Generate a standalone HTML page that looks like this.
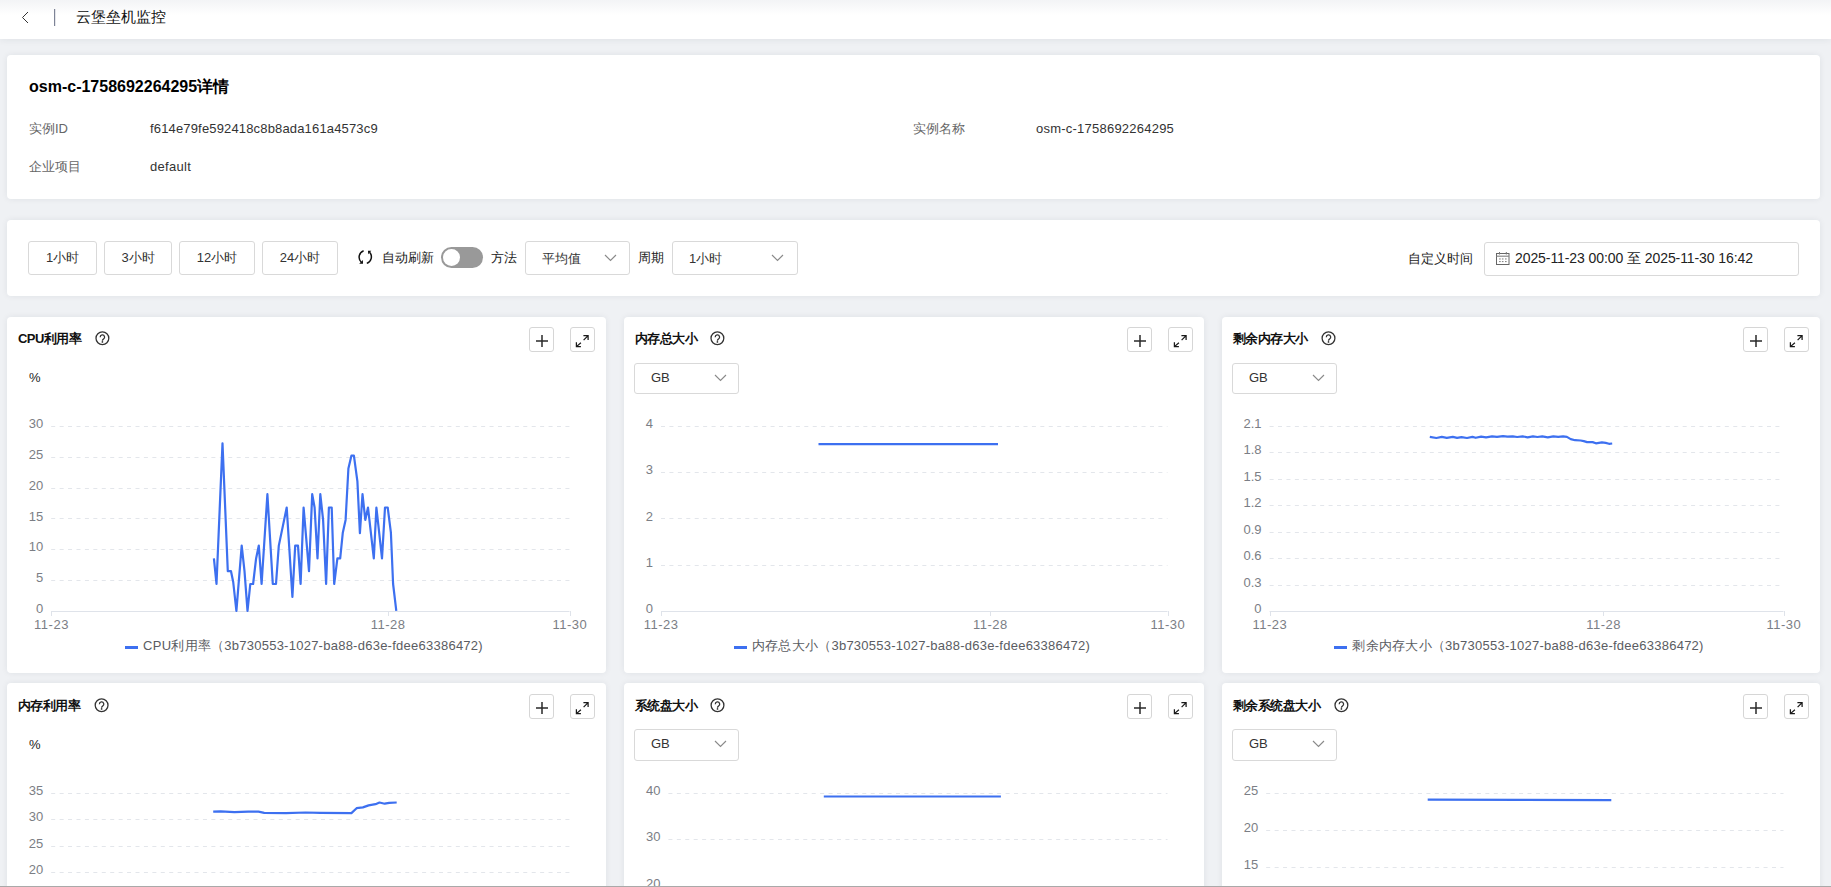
<!DOCTYPE html><html><head><meta charset="utf-8"><title>云堡垒机监控</title><style>
*{margin:0;padding:0;box-sizing:border-box}
html,body{width:1831px;height:887px;overflow:hidden;background:#eff1f4;font-family:"Liberation Sans",sans-serif;color:#333}
.abs{position:absolute}
.card{position:absolute;background:#fff;border-radius:4px;box-shadow:0 0 6px rgba(30,40,60,0.075)}
.t13{font-size:13px;line-height:16px;white-space:nowrap}
.btn{position:absolute;border:1px solid #d9d9d9;border-radius:3px;background:#fff;font-size:13px;color:#333;text-align:center;white-space:nowrap}
.sel{position:absolute;border:1px solid #d9d9d9;border-radius:3px;background:#fff;font-size:13px;color:#333;white-space:nowrap}
.ibtn{position:absolute;width:25px;height:25px;border:1px solid #d6d6d6;border-radius:3px;background:#fff}
.ttl{position:absolute;font-size:13px;font-weight:bold;color:#111;letter-spacing:-0.55px;white-space:nowrap;line-height:16px}
.lg{position:absolute;font-size:13px;color:#5a5c62;white-space:nowrap;line-height:16px;text-align:center;letter-spacing:0.25px}
svg text{font-family:"Liberation Sans",sans-serif}
</style></head><body>
<div class="abs" style="left:0;top:0;width:1831px;height:39px;background:linear-gradient(#f3f4f6 0px,#fff 15px);box-shadow:0 1px 7px rgba(30,40,60,0.07)"></div>
<svg class="abs" style="left:0;top:0" width="80" height="39"><path d="M28 12 L22.5 17.5 L28 23" fill="none" stroke="#333" stroke-width="1"/><rect x="54" y="9" width="1.2" height="17" fill="#7d8396"/></svg>
<div class="abs" style="left:76px;top:8px;font-size:15px;line-height:18px;color:#111;white-space:nowrap">云堡垒机监控</div>
<div class="card" style="left:7px;top:55px;width:1813px;height:144px"></div>
<div class="abs" style="left:29px;top:78px;font-size:16px;line-height:18px;font-weight:bold;color:#000;white-space:nowrap">osm-c-1758692264295详情</div>
<div class="abs t13" style="left:29px;top:121px;color:#666">实例ID</div>
<div class="abs t13" style="left:150px;top:121px;color:#333;letter-spacing:0.16px">f614e79fe592418c8b8ada161a4573c9</div>
<div class="abs t13" style="left:913px;top:121px;color:#666">实例名称</div>
<div class="abs t13" style="left:1036px;top:121px;color:#333;letter-spacing:0.23px">osm-c-1758692264295</div>
<div class="abs t13" style="left:29px;top:159px;color:#666">企业项目</div>
<div class="abs t13" style="left:150px;top:159px;color:#333;letter-spacing:0.3px">default</div>
<div class="card" style="left:7px;top:220px;width:1813px;height:76px"></div>
<div class="btn" style="left:28px;top:241px;width:69px;height:34px;line-height:32px">1小时</div>
<div class="btn" style="left:104px;top:241px;width:68px;height:34px;line-height:32px">3小时</div>
<div class="btn" style="left:179px;top:241px;width:76px;height:34px;line-height:32px">12小时</div>
<div class="btn" style="left:262px;top:241px;width:76px;height:34px;line-height:32px">24小时</div>
<svg class="abs" style="left:352px;top:246px" width="28" height="24"><path d="M11.6 4.7 A6.9 6.9 0 0 0 9.3 16.2" fill="none" stroke="#111" stroke-width="1.5"/><path d="M7.2 17.8 L11 17.8 L10.9 13.9 Z" fill="#111"/><path d="M14.8 17.4 A6.9 6.9 0 0 0 17.6 6.3" fill="none" stroke="#111" stroke-width="1.5"/><path d="M16.0 4.8 L19.3 4.8 L16.2 8.3 Z" fill="#111"/></svg>
<div class="abs t13" style="left:382px;top:250px;color:#222">自动刷新</div>
<div class="abs" style="left:441px;top:247px;width:42px;height:21px;border-radius:11px;background:#999"></div>
<div class="abs" style="left:443px;top:249px;width:17px;height:17px;border-radius:50%;background:#fff"></div>
<div class="abs t13" style="left:491px;top:250px;color:#222">方法</div>
<div class="sel" style="left:525px;top:241px;width:105px;height:34px"></div>
<div class="abs t13" style="left:542px;top:251px;color:#333">平均值</div>
<svg class="abs" style="left:603px;top:253px" width="16" height="10"><path d="M2 2 L7.5 7.5 L13 2" fill="none" stroke="#8a8a8a" stroke-width="1.15"/></svg>
<div class="abs t13" style="left:638px;top:250px;color:#222">周期</div>
<div class="sel" style="left:672px;top:241px;width:126px;height:34px"></div>
<div class="abs t13" style="left:689px;top:251px;color:#333">1小时</div>
<svg class="abs" style="left:770px;top:253px" width="16" height="10"><path d="M2 2 L7.5 7.5 L13 2" fill="none" stroke="#8a8a8a" stroke-width="1.15"/></svg>
<div class="abs t13" style="left:1408px;top:251px;color:#222">自定义时间</div>
<div class="sel" style="left:1484px;top:242px;width:315px;height:34px"></div>
<svg class="abs" style="left:1495px;top:250px" width="16" height="17"><rect x="1.5" y="3.5" width="12.5" height="11" fill="none" stroke="#666" stroke-width="1"/><line x1="1.5" y1="6.2" x2="14" y2="6.2" stroke="#888" stroke-width="1.2"/><line x1="4.5" y1="2" x2="4.5" y2="4.5" stroke="#777"/><line x1="11.3" y1="2" x2="11.3" y2="4.5" stroke="#777"/><g fill="#888"><rect x="4.1" y="8.4" width="1.6" height="1.1"/><rect x="6.9" y="8.4" width="1.6" height="1.1"/><rect x="10" y="8.4" width="1.6" height="1.1"/><rect x="4.1" y="11" width="1.6" height="1.1"/><rect x="6.9" y="11" width="1.6" height="1.1"/><rect x="10" y="11" width="1.6" height="1.1"/></g></svg>
<div class="abs" style="left:1515px;top:250px;font-size:14px;line-height:17px;color:#222;white-space:nowrap;letter-spacing:-0.08px">2025-11-23 00:00 至 2025-11-30 16:42</div>
<div class="card" style="left:7px;top:317px;width:599px;height:356px"></div>
<div class="ttl" style="left:18px;top:331px">CPU利用率</div>
<div class="ibtn" style="left:529px;top:327px"></div>
<div class="ibtn" style="left:570px;top:327px"></div>
<div class="abs t13" style="left:29px;top:370px;color:#222">%</div>
<div class="lg" style="left:4px;top:638px;width:600px"><span style="display:inline-block;width:13px;height:2.5px;background:#3d70f0;vertical-align:middle;margin-right:5px;position:relative;top:1px"></span>CPU利用率（3b730553-1027-ba88-d63e-fdee63386472)</div>
<div class="card" style="left:624px;top:317px;width:580px;height:356px"></div>
<div class="ttl" style="left:635px;top:331px">内存总大小</div>
<div class="ibtn" style="left:1127px;top:327px"></div>
<div class="ibtn" style="left:1168px;top:327px"></div>
<div class="sel" style="left:634px;top:363px;width:105px;height:31px"></div>
<div class="abs t13" style="left:651px;top:370px;color:#333">GB</div>
<svg class="abs" style="left:713px;top:373px" width="16" height="10"><path d="M2 2 L7.5 7.5 L13 2" fill="none" stroke="#8a8a8a" stroke-width="1.15"/></svg>
<div class="lg" style="left:612px;top:638px;width:600px"><span style="display:inline-block;width:13px;height:2.5px;background:#3d70f0;vertical-align:middle;margin-right:5px;position:relative;top:1px"></span>内存总大小（3b730553-1027-ba88-d63e-fdee63386472)</div>
<div class="card" style="left:1222px;top:317px;width:598px;height:356px"></div>
<div class="ttl" style="left:1233px;top:331px">剩余内存大小</div>
<div class="ibtn" style="left:1743px;top:327px"></div>
<div class="ibtn" style="left:1784px;top:327px"></div>
<div class="sel" style="left:1232px;top:363px;width:105px;height:31px"></div>
<div class="abs t13" style="left:1249px;top:370px;color:#333">GB</div>
<svg class="abs" style="left:1311px;top:373px" width="16" height="10"><path d="M2 2 L7.5 7.5 L13 2" fill="none" stroke="#8a8a8a" stroke-width="1.15"/></svg>
<div class="lg" style="left:1219px;top:638px;width:600px"><span style="display:inline-block;width:13px;height:2.5px;background:#3d70f0;vertical-align:middle;margin-right:5px;position:relative;top:1px"></span>剩余内存大小（3b730553-1027-ba88-d63e-fdee63386472)</div>
<div class="card" style="left:7px;top:683px;width:599px;height:400px"></div>
<div class="ttl" style="left:18px;top:698px">内存利用率</div>
<div class="ibtn" style="left:529px;top:694px"></div>
<div class="ibtn" style="left:570px;top:694px"></div>
<div class="abs t13" style="left:29px;top:737px;color:#222">%</div>
<div class="lg" style="left:4px;top:1005px;width:600px"><span style="display:inline-block;width:13px;height:2.5px;background:#3d70f0;vertical-align:middle;margin-right:5px;position:relative;top:1px"></span>内存利用率（3b730553-1027-ba88-d63e-fdee63386472)</div>
<div class="card" style="left:624px;top:683px;width:580px;height:400px"></div>
<div class="ttl" style="left:635px;top:698px">系统盘大小</div>
<div class="ibtn" style="left:1127px;top:694px"></div>
<div class="ibtn" style="left:1168px;top:694px"></div>
<div class="sel" style="left:634px;top:729px;width:105px;height:32px"></div>
<div class="abs t13" style="left:651px;top:736px;color:#333">GB</div>
<svg class="abs" style="left:713px;top:739px" width="16" height="10"><path d="M2 2 L7.5 7.5 L13 2" fill="none" stroke="#8a8a8a" stroke-width="1.15"/></svg>
<div class="lg" style="left:612px;top:1005px;width:600px"><span style="display:inline-block;width:13px;height:2.5px;background:#3d70f0;vertical-align:middle;margin-right:5px;position:relative;top:1px"></span>系统盘大小（3b730553-1027-ba88-d63e-fdee63386472)</div>
<div class="card" style="left:1222px;top:683px;width:598px;height:400px"></div>
<div class="ttl" style="left:1233px;top:698px">剩余系统盘大小</div>
<div class="ibtn" style="left:1743px;top:694px"></div>
<div class="ibtn" style="left:1784px;top:694px"></div>
<div class="sel" style="left:1232px;top:729px;width:105px;height:32px"></div>
<div class="abs t13" style="left:1249px;top:736px;color:#333">GB</div>
<svg class="abs" style="left:1311px;top:739px" width="16" height="10"><path d="M2 2 L7.5 7.5 L13 2" fill="none" stroke="#8a8a8a" stroke-width="1.15"/></svg>
<div class="lg" style="left:1219px;top:1005px;width:600px"><span style="display:inline-block;width:13px;height:2.5px;background:#3d70f0;vertical-align:middle;margin-right:5px;position:relative;top:1px"></span>剩余系统盘大小（3b730553-1027-ba88-d63e-fdee63386472)</div>
<svg class="abs" style="left:0;top:0" width="1831" height="887">
<circle cx="102.4" cy="338.3" r="6.4" fill="none" stroke="#333" stroke-width="1.3"/>
<path d="M100.2 337.2 a2.2 2.2 0 1 1 3.2 1.9 c-0.8 0.4 -1 0.9 -1 1.6" fill="none" stroke="#333" stroke-width="1.3"/>
<circle cx="102.4" cy="341.9" r="0.85" fill="#333"/>
<line x1="51.2" y1="426.5" x2="569.5" y2="426.5" stroke="#e3e6eb" stroke-width="1" stroke-dasharray="4 4.43"/>
<text x="43.2" y="428.0" font-size="13" fill="#7b7e85" text-anchor="end">30</text>
<line x1="51.2" y1="457.5" x2="569.5" y2="457.5" stroke="#e3e6eb" stroke-width="1" stroke-dasharray="4 4.43"/>
<text x="43.2" y="458.8" font-size="13" fill="#7b7e85" text-anchor="end">25</text>
<line x1="51.2" y1="488.5" x2="569.5" y2="488.5" stroke="#e3e6eb" stroke-width="1" stroke-dasharray="4 4.43"/>
<text x="43.2" y="489.7" font-size="13" fill="#7b7e85" text-anchor="end">20</text>
<line x1="51.2" y1="518.5" x2="569.5" y2="518.5" stroke="#e3e6eb" stroke-width="1" stroke-dasharray="4 4.43"/>
<text x="43.2" y="520.5" font-size="13" fill="#7b7e85" text-anchor="end">15</text>
<line x1="51.2" y1="549.5" x2="569.5" y2="549.5" stroke="#e3e6eb" stroke-width="1" stroke-dasharray="4 4.43"/>
<text x="43.2" y="551.3" font-size="13" fill="#7b7e85" text-anchor="end">10</text>
<line x1="51.2" y1="580.5" x2="569.5" y2="580.5" stroke="#e3e6eb" stroke-width="1" stroke-dasharray="4 4.43"/>
<text x="43.2" y="582.2" font-size="13" fill="#7b7e85" text-anchor="end">5</text>
<text x="43.2" y="613.0" font-size="13" fill="#7b7e85" text-anchor="end">0</text>
<line x1="51.2" y1="611.5" x2="569.5" y2="611.5" stroke="#dfe3ea" stroke-width="1"/>
<line x1="51.5" y1="611.0" x2="51.5" y2="616.0" stroke="#dfe3ea" stroke-width="1"/>
<line x1="388.5" y1="611.0" x2="388.5" y2="616.0" stroke="#dfe3ea" stroke-width="1"/>
<line x1="570.5" y1="611.0" x2="570.5" y2="616.0" stroke="#dfe3ea" stroke-width="1"/>
<text x="51.5" y="629.0" font-size="13" fill="#7b7e85" text-anchor="middle" letter-spacing="0.5">11-23</text>
<text x="388.2" y="629.0" font-size="13" fill="#7b7e85" text-anchor="middle" letter-spacing="0.5">11-28</text>
<text x="569.8" y="629.0" font-size="13" fill="#7b7e85" text-anchor="middle" letter-spacing="0.5">11-30</text>
<polyline points="213.9,558.4 216.5,584.0 222.5,443.3 227.8,571.2 231.0,571.2 233.2,582.0 236.4,610.8 241.7,545.6 244.5,571.2 247.5,610.8 250.3,584.0 253.1,584.0 256.1,558.4 258.8,545.6 261.6,584.0 267.4,494.2 272.8,584.0 276.0,584.0 278.8,545.6 286.7,507.5 292.4,596.9 295.2,545.6 298.0,545.6 300.6,584.0 303.6,507.5 309.0,571.2 312.2,494.2 314.6,507.5 317.5,558.4 320.3,494.2 323.1,519.9 326.1,584.0 328.9,507.5 331.7,507.5 334.2,584.0 337.4,558.4 340.2,558.4 342.8,532.7 345.6,519.9 348.4,468.5 351.4,455.7 353.9,455.7 357.4,481.4 359.9,533.1 362.5,494.2 365.3,519.9 368.0,507.5 373.8,558.4 376.4,507.5 382.0,558.4 385.0,507.5 387.7,507.5 390.9,532.7 393.1,584.0 396.3,610.8" fill="none" stroke="#3d70f0" stroke-width="2.2" stroke-linejoin="round"/>
<circle cx="717.4" cy="338.3" r="6.4" fill="none" stroke="#333" stroke-width="1.3"/>
<path d="M715.2 337.2 a2.2 2.2 0 1 1 3.2 1.9 c-0.8 0.4 -1 0.9 -1 1.6" fill="none" stroke="#333" stroke-width="1.3"/>
<circle cx="717.4" cy="341.9" r="0.85" fill="#333"/>
<line x1="661.0" y1="426.5" x2="1167.5" y2="426.5" stroke="#e3e6eb" stroke-width="1" stroke-dasharray="4 4.43"/>
<text x="653.0" y="428.0" font-size="13" fill="#7b7e85" text-anchor="end">4</text>
<line x1="661.0" y1="472.5" x2="1167.5" y2="472.5" stroke="#e3e6eb" stroke-width="1" stroke-dasharray="4 4.43"/>
<text x="653.0" y="474.2" font-size="13" fill="#7b7e85" text-anchor="end">3</text>
<line x1="661.0" y1="518.5" x2="1167.5" y2="518.5" stroke="#e3e6eb" stroke-width="1" stroke-dasharray="4 4.43"/>
<text x="653.0" y="520.5" font-size="13" fill="#7b7e85" text-anchor="end">2</text>
<line x1="661.0" y1="565.5" x2="1167.5" y2="565.5" stroke="#e3e6eb" stroke-width="1" stroke-dasharray="4 4.43"/>
<text x="653.0" y="566.8" font-size="13" fill="#7b7e85" text-anchor="end">1</text>
<text x="653.0" y="613.0" font-size="13" fill="#7b7e85" text-anchor="end">0</text>
<line x1="661.0" y1="611.5" x2="1167.5" y2="611.5" stroke="#dfe3ea" stroke-width="1"/>
<line x1="661.5" y1="611.0" x2="661.5" y2="616.0" stroke="#dfe3ea" stroke-width="1"/>
<line x1="990.5" y1="611.0" x2="990.5" y2="616.0" stroke="#dfe3ea" stroke-width="1"/>
<line x1="1168.5" y1="611.0" x2="1168.5" y2="616.0" stroke="#dfe3ea" stroke-width="1"/>
<text x="661.2" y="629.0" font-size="13" fill="#7b7e85" text-anchor="middle" letter-spacing="0.5">11-23</text>
<text x="990.3" y="629.0" font-size="13" fill="#7b7e85" text-anchor="middle" letter-spacing="0.5">11-28</text>
<text x="1167.8" y="629.0" font-size="13" fill="#7b7e85" text-anchor="middle" letter-spacing="0.5">11-30</text>
<polyline points="818.5,444.1 998.0,444.1" fill="none" stroke="#3d70f0" stroke-width="2.2" stroke-linejoin="round"/>
<circle cx="1328.5" cy="338.3" r="6.4" fill="none" stroke="#333" stroke-width="1.3"/>
<path d="M1326.3 337.2 a2.2 2.2 0 1 1 3.2 1.9 c-0.8 0.4 -1 0.9 -1 1.6" fill="none" stroke="#333" stroke-width="1.3"/>
<circle cx="1328.5" cy="341.9" r="0.85" fill="#333"/>
<line x1="1269.6" y1="426.5" x2="1783.5" y2="426.5" stroke="#e3e6eb" stroke-width="1" stroke-dasharray="4 4.43"/>
<text x="1261.6" y="428.0" font-size="13" fill="#7b7e85" text-anchor="end">2.1</text>
<line x1="1269.6" y1="452.5" x2="1783.5" y2="452.5" stroke="#e3e6eb" stroke-width="1" stroke-dasharray="4 4.43"/>
<text x="1261.6" y="454.4" font-size="13" fill="#7b7e85" text-anchor="end">1.8</text>
<line x1="1269.6" y1="479.5" x2="1783.5" y2="479.5" stroke="#e3e6eb" stroke-width="1" stroke-dasharray="4 4.43"/>
<text x="1261.6" y="480.9" font-size="13" fill="#7b7e85" text-anchor="end">1.5</text>
<line x1="1269.6" y1="505.5" x2="1783.5" y2="505.5" stroke="#e3e6eb" stroke-width="1" stroke-dasharray="4 4.43"/>
<text x="1261.6" y="507.3" font-size="13" fill="#7b7e85" text-anchor="end">1.2</text>
<line x1="1269.6" y1="532.5" x2="1783.5" y2="532.5" stroke="#e3e6eb" stroke-width="1" stroke-dasharray="4 4.43"/>
<text x="1261.6" y="533.7" font-size="13" fill="#7b7e85" text-anchor="end">0.9</text>
<line x1="1269.6" y1="558.5" x2="1783.5" y2="558.5" stroke="#e3e6eb" stroke-width="1" stroke-dasharray="4 4.43"/>
<text x="1261.6" y="560.1" font-size="13" fill="#7b7e85" text-anchor="end">0.6</text>
<line x1="1269.6" y1="585.5" x2="1783.5" y2="585.5" stroke="#e3e6eb" stroke-width="1" stroke-dasharray="4 4.43"/>
<text x="1261.6" y="586.6" font-size="13" fill="#7b7e85" text-anchor="end">0.3</text>
<text x="1261.6" y="613.0" font-size="13" fill="#7b7e85" text-anchor="end">0</text>
<line x1="1269.6" y1="611.5" x2="1783.5" y2="611.5" stroke="#dfe3ea" stroke-width="1"/>
<line x1="1270.5" y1="611.0" x2="1270.5" y2="616.0" stroke="#dfe3ea" stroke-width="1"/>
<line x1="1603.5" y1="611.0" x2="1603.5" y2="616.0" stroke="#dfe3ea" stroke-width="1"/>
<line x1="1784.5" y1="611.0" x2="1784.5" y2="616.0" stroke="#dfe3ea" stroke-width="1"/>
<text x="1269.8" y="629.0" font-size="13" fill="#7b7e85" text-anchor="middle" letter-spacing="0.5">11-23</text>
<text x="1603.7" y="629.0" font-size="13" fill="#7b7e85" text-anchor="middle" letter-spacing="0.5">11-28</text>
<text x="1783.8" y="629.0" font-size="13" fill="#7b7e85" text-anchor="middle" letter-spacing="0.5">11-30</text>
<polyline points="1429.8,436.9 1436.4,438.0 1441.8,436.9 1446.8,437.8 1452.8,436.9 1457.1,437.8 1461.5,437.1 1467.0,438.0 1472.4,436.9 1475.7,437.8 1481.2,436.6 1486.1,437.3 1492.1,436.4 1497.0,436.9 1503.0,436.2 1507.4,436.7 1512.8,436.4 1517.2,437.0 1522.7,436.4 1527.6,437.3 1533.0,436.4 1537.4,437.0 1542.3,436.4 1547.8,437.3 1553.3,436.4 1558.2,436.9 1563.1,436.4 1566.9,436.9 1570.7,439.1 1575.1,440.2 1580.6,440.5 1583.8,441.1 1587.1,442.1 1592.6,442.1 1595.9,443.3 1601.9,442.4 1605.7,442.9 1609.0,443.8 1612.2,443.5" fill="none" stroke="#3d70f0" stroke-width="2.2" stroke-linejoin="round"/>
<circle cx="101.6" cy="705.3" r="6.4" fill="none" stroke="#333" stroke-width="1.3"/>
<path d="M99.4 704.2 a2.2 2.2 0 1 1 3.2 1.9 c-0.8 0.4 -1 0.9 -1 1.6" fill="none" stroke="#333" stroke-width="1.3"/>
<circle cx="101.6" cy="708.9" r="0.85" fill="#333"/>
<line x1="51.2" y1="793.5" x2="569.5" y2="793.5" stroke="#e3e6eb" stroke-width="1" stroke-dasharray="4 4.43"/>
<text x="43.2" y="795.0" font-size="13" fill="#7b7e85" text-anchor="end">35</text>
<line x1="51.2" y1="819.5" x2="569.5" y2="819.5" stroke="#e3e6eb" stroke-width="1" stroke-dasharray="4 4.43"/>
<text x="43.2" y="821.4" font-size="13" fill="#7b7e85" text-anchor="end">30</text>
<line x1="51.2" y1="846.5" x2="569.5" y2="846.5" stroke="#e3e6eb" stroke-width="1" stroke-dasharray="4 4.43"/>
<text x="43.2" y="847.9" font-size="13" fill="#7b7e85" text-anchor="end">25</text>
<line x1="51.2" y1="872.5" x2="569.5" y2="872.5" stroke="#e3e6eb" stroke-width="1" stroke-dasharray="4 4.43"/>
<text x="43.2" y="874.3" font-size="13" fill="#7b7e85" text-anchor="end">20</text>
<line x1="51.2" y1="899.5" x2="569.5" y2="899.5" stroke="#e3e6eb" stroke-width="1" stroke-dasharray="4 4.43"/>
<text x="43.2" y="900.7" font-size="13" fill="#7b7e85" text-anchor="end">15</text>
<line x1="51.2" y1="925.5" x2="569.5" y2="925.5" stroke="#e3e6eb" stroke-width="1" stroke-dasharray="4 4.43"/>
<text x="43.2" y="927.1" font-size="13" fill="#7b7e85" text-anchor="end">10</text>
<line x1="51.2" y1="952.5" x2="569.5" y2="952.5" stroke="#e3e6eb" stroke-width="1" stroke-dasharray="4 4.43"/>
<text x="43.2" y="953.6" font-size="13" fill="#7b7e85" text-anchor="end">5</text>
<text x="43.2" y="980.0" font-size="13" fill="#7b7e85" text-anchor="end">0</text>
<line x1="51.2" y1="978.5" x2="569.5" y2="978.5" stroke="#dfe3ea" stroke-width="1"/>
<line x1="51.5" y1="978.0" x2="51.5" y2="983.0" stroke="#dfe3ea" stroke-width="1"/>
<line x1="388.5" y1="978.0" x2="388.5" y2="983.0" stroke="#dfe3ea" stroke-width="1"/>
<line x1="570.5" y1="978.0" x2="570.5" y2="983.0" stroke="#dfe3ea" stroke-width="1"/>
<text x="51.5" y="996.0" font-size="13" fill="#7b7e85" text-anchor="middle" letter-spacing="0.5">11-23</text>
<text x="388.2" y="996.0" font-size="13" fill="#7b7e85" text-anchor="middle" letter-spacing="0.5">11-28</text>
<text x="569.8" y="996.0" font-size="13" fill="#7b7e85" text-anchor="middle" letter-spacing="0.5">11-30</text>
<polyline points="213.2,811.6 220.6,811.4 234.4,812.2 248.2,811.6 258.5,811.7 264.2,812.8 286.0,813.1 305.5,812.5 320.4,812.9 351.4,813.1 356.6,808.2 362.9,807.4 368.6,805.4 375.5,804.2 379.5,802.5 384.7,803.7 389.2,802.8 396.7,802.5" fill="none" stroke="#3d70f0" stroke-width="2.2" stroke-linejoin="round"/>
<circle cx="717.5" cy="705.3" r="6.4" fill="none" stroke="#333" stroke-width="1.3"/>
<path d="M715.3 704.2 a2.2 2.2 0 1 1 3.2 1.9 c-0.8 0.4 -1 0.9 -1 1.6" fill="none" stroke="#333" stroke-width="1.3"/>
<circle cx="717.5" cy="708.9" r="0.85" fill="#333"/>
<line x1="668.4" y1="793.5" x2="1167.5" y2="793.5" stroke="#e3e6eb" stroke-width="1" stroke-dasharray="4 4.43"/>
<text x="660.4" y="795.0" font-size="13" fill="#7b7e85" text-anchor="end">40</text>
<line x1="668.4" y1="839.5" x2="1167.5" y2="839.5" stroke="#e3e6eb" stroke-width="1" stroke-dasharray="4 4.43"/>
<text x="660.4" y="841.2" font-size="13" fill="#7b7e85" text-anchor="end">30</text>
<line x1="668.4" y1="886.5" x2="1167.5" y2="886.5" stroke="#e3e6eb" stroke-width="1" stroke-dasharray="4 4.43"/>
<text x="660.4" y="887.5" font-size="13" fill="#7b7e85" text-anchor="end">20</text>
<line x1="668.4" y1="932.5" x2="1167.5" y2="932.5" stroke="#e3e6eb" stroke-width="1" stroke-dasharray="4 4.43"/>
<text x="660.4" y="933.8" font-size="13" fill="#7b7e85" text-anchor="end">10</text>
<text x="660.4" y="980.0" font-size="13" fill="#7b7e85" text-anchor="end">0</text>
<line x1="668.4" y1="978.5" x2="1167.5" y2="978.5" stroke="#dfe3ea" stroke-width="1"/>
<line x1="668.5" y1="978.0" x2="668.5" y2="983.0" stroke="#dfe3ea" stroke-width="1"/>
<line x1="993.5" y1="978.0" x2="993.5" y2="983.0" stroke="#dfe3ea" stroke-width="1"/>
<line x1="1168.5" y1="978.0" x2="1168.5" y2="983.0" stroke="#dfe3ea" stroke-width="1"/>
<text x="668.6" y="996.0" font-size="13" fill="#7b7e85" text-anchor="middle" letter-spacing="0.5">11-23</text>
<text x="992.9" y="996.0" font-size="13" fill="#7b7e85" text-anchor="middle" letter-spacing="0.5">11-28</text>
<text x="1167.8" y="996.0" font-size="13" fill="#7b7e85" text-anchor="middle" letter-spacing="0.5">11-30</text>
<polyline points="823.8,796.5 1000.9,796.5" fill="none" stroke="#3d70f0" stroke-width="2.2" stroke-linejoin="round"/>
<circle cx="1341.4" cy="705.3" r="6.4" fill="none" stroke="#333" stroke-width="1.3"/>
<path d="M1339.2 704.2 a2.2 2.2 0 1 1 3.2 1.9 c-0.8 0.4 -1 0.9 -1 1.6" fill="none" stroke="#333" stroke-width="1.3"/>
<circle cx="1341.4" cy="708.9" r="0.85" fill="#333"/>
<line x1="1266.2" y1="793.5" x2="1783.5" y2="793.5" stroke="#e3e6eb" stroke-width="1" stroke-dasharray="4 4.43"/>
<text x="1258.2" y="795.0" font-size="13" fill="#7b7e85" text-anchor="end">25</text>
<line x1="1266.2" y1="830.5" x2="1783.5" y2="830.5" stroke="#e3e6eb" stroke-width="1" stroke-dasharray="4 4.43"/>
<text x="1258.2" y="832.0" font-size="13" fill="#7b7e85" text-anchor="end">20</text>
<line x1="1266.2" y1="867.5" x2="1783.5" y2="867.5" stroke="#e3e6eb" stroke-width="1" stroke-dasharray="4 4.43"/>
<text x="1258.2" y="869.0" font-size="13" fill="#7b7e85" text-anchor="end">15</text>
<line x1="1266.2" y1="904.5" x2="1783.5" y2="904.5" stroke="#e3e6eb" stroke-width="1" stroke-dasharray="4 4.43"/>
<text x="1258.2" y="906.0" font-size="13" fill="#7b7e85" text-anchor="end">10</text>
<line x1="1266.2" y1="941.5" x2="1783.5" y2="941.5" stroke="#e3e6eb" stroke-width="1" stroke-dasharray="4 4.43"/>
<text x="1258.2" y="943.0" font-size="13" fill="#7b7e85" text-anchor="end">5</text>
<text x="1258.2" y="980.0" font-size="13" fill="#7b7e85" text-anchor="end">0</text>
<line x1="1266.2" y1="978.5" x2="1783.5" y2="978.5" stroke="#dfe3ea" stroke-width="1"/>
<line x1="1266.5" y1="978.0" x2="1266.5" y2="983.0" stroke="#dfe3ea" stroke-width="1"/>
<line x1="1602.5" y1="978.0" x2="1602.5" y2="983.0" stroke="#dfe3ea" stroke-width="1"/>
<line x1="1784.5" y1="978.0" x2="1784.5" y2="983.0" stroke="#dfe3ea" stroke-width="1"/>
<text x="1266.5" y="996.0" font-size="13" fill="#7b7e85" text-anchor="middle" letter-spacing="0.5">11-23</text>
<text x="1602.5" y="996.0" font-size="13" fill="#7b7e85" text-anchor="middle" letter-spacing="0.5">11-28</text>
<text x="1783.8" y="996.0" font-size="13" fill="#7b7e85" text-anchor="middle" letter-spacing="0.5">11-30</text>
<polyline points="1427.7,799.6 1520.0,799.8 1611.3,800.2" fill="none" stroke="#3d70f0" stroke-width="2.2" stroke-linejoin="round"/>
<path d="M536.0 341.0 h12 M542.0 335.0 v12" stroke="#2a2a2a" stroke-width="1.5" fill="none"/>
<path d="M583.4 335.6 H588.1 V339.9 M588.1 335.6 L583.6 340.1" stroke="#1a1a1a" stroke-width="1.25" fill="none"/>
<path d="M576.4 342.3 V346.6 H580.9 M576.4 346.6 L580.9 342.7" stroke="#1a1a1a" stroke-width="1.25" fill="none"/>
<path d="M1134.0 341.0 h12 M1140.0 335.0 v12" stroke="#2a2a2a" stroke-width="1.5" fill="none"/>
<path d="M1181.4 335.6 H1186.1 V339.9 M1186.1 335.6 L1181.6 340.1" stroke="#1a1a1a" stroke-width="1.25" fill="none"/>
<path d="M1174.4 342.3 V346.6 H1178.9 M1174.4 346.6 L1178.9 342.7" stroke="#1a1a1a" stroke-width="1.25" fill="none"/>
<path d="M1750.0 341.0 h12 M1756.0 335.0 v12" stroke="#2a2a2a" stroke-width="1.5" fill="none"/>
<path d="M1797.4 335.6 H1802.1 V339.9 M1802.1 335.6 L1797.6 340.1" stroke="#1a1a1a" stroke-width="1.25" fill="none"/>
<path d="M1790.4 342.3 V346.6 H1794.9 M1790.4 346.6 L1794.9 342.7" stroke="#1a1a1a" stroke-width="1.25" fill="none"/>
<path d="M536.0 708.0 h12 M542.0 702.0 v12" stroke="#2a2a2a" stroke-width="1.5" fill="none"/>
<path d="M583.4 702.6 H588.1 V706.9 M588.1 702.6 L583.6 707.1" stroke="#1a1a1a" stroke-width="1.25" fill="none"/>
<path d="M576.4 709.3 V713.6 H580.9 M576.4 713.6 L580.9 709.7" stroke="#1a1a1a" stroke-width="1.25" fill="none"/>
<path d="M1134.0 708.0 h12 M1140.0 702.0 v12" stroke="#2a2a2a" stroke-width="1.5" fill="none"/>
<path d="M1181.4 702.6 H1186.1 V706.9 M1186.1 702.6 L1181.6 707.1" stroke="#1a1a1a" stroke-width="1.25" fill="none"/>
<path d="M1174.4 709.3 V713.6 H1178.9 M1174.4 713.6 L1178.9 709.7" stroke="#1a1a1a" stroke-width="1.25" fill="none"/>
<path d="M1750.0 708.0 h12 M1756.0 702.0 v12" stroke="#2a2a2a" stroke-width="1.5" fill="none"/>
<path d="M1797.4 702.6 H1802.1 V706.9 M1802.1 702.6 L1797.6 707.1" stroke="#1a1a1a" stroke-width="1.25" fill="none"/>
<path d="M1790.4 709.3 V713.6 H1794.9 M1790.4 713.6 L1794.9 709.7" stroke="#1a1a1a" stroke-width="1.25" fill="none"/>
</svg>
<div class="abs" style="left:0;top:886px;width:1831px;height:1px;background:#a9a9a9"></div>
</body></html>
